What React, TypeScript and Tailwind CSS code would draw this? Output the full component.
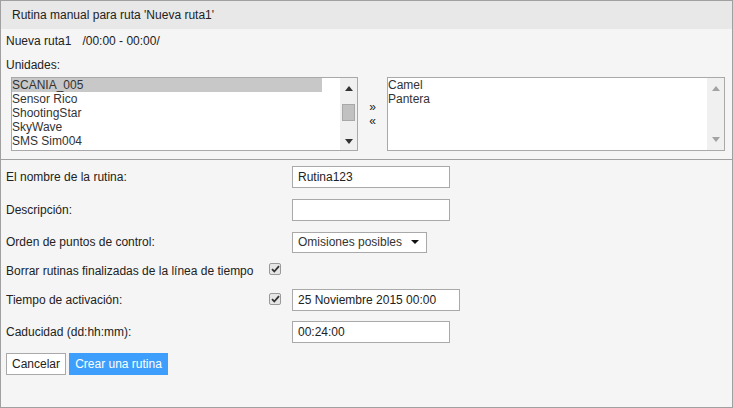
import React from "react";

const Check = () => (
  <span className="flex h-[12px] w-[12px] items-center justify-center rounded-[2px] border border-[#9a9a9a] bg-[#e6e6e6]">
    <svg width="9" height="8" viewBox="0 0 9 8">
      <path d="M1 4.2 L3.3 6.5 L8 1.2" fill="none" stroke="#333" strokeWidth="1.8" />
    </svg>
  </span>
);

const Up = ({ c }: { c: string }) => (
  <svg width="8" height="5" viewBox="0 0 8 5"><path d="M0 5 L4 0 L8 5 Z" fill={c} /></svg>
);
const Down = ({ c }: { c: string }) => (
  <svg width="8" height="5" viewBox="0 0 8 5"><path d="M0 0 L4 5 L8 0 Z" fill={c} /></svg>
);

export default function App() {
  const left = ["SCANIA_005", "Sensor Rico", "ShootingStar", "SkyWave", "SMS Sim004"];
  const right = ["Camel", "Pantera"];
  return (
    <div className="flex h-[408px] w-[733px] flex-col border border-[#a0a0a0] bg-[#f5f5f5] font-['Liberation_Sans',Arial,sans-serif] text-[12px] text-[#222]">
      <div className="flex h-[28px] items-center bg-[#e8e8e8] pl-[11px]">Rutina manual para ruta 'Nueva ruta1'</div>
      <div className="flex h-[131px] flex-col border-b border-[#a0a0a0] pl-[5px] pt-[5px]">
        <div className="h-[14px] leading-[14px]">
          Nueva ruta1<span className="ml-[11px]">/00:00 - 00:00/</span>
        </div>
        <div className="mt-[10px] h-[14px] leading-[14px]">Unidades:</div>
        <div className="mt-[5px] flex">
          <div className="ml-[5px] flex h-[74px] w-[347px] border border-[#a9a9a9] bg-white text-[#333]">
            <div className="flex-1">
              {left.map((t, i) => (
                <div key={t} className={"h-[14px] w-[310px] leading-[14px] " + (i === 0 ? "bg-[#c8c8c8]" : "")}>{t}</div>
              ))}
            </div>
            <div className="flex w-[17px] flex-col items-center bg-[#f0f0f0]">
              <div className="mt-[8px]"><Up c="#333" /></div>
              <div className="mt-[13px] h-[17px] w-[13px] border border-[#a8a8a8] bg-[#c1c1c1]"></div>
              <div className="mt-[18px]"><Down c="#333" /></div>
            </div>
          </div>
          <div className="flex w-[29px] flex-col items-center justify-center text-[12px] leading-[14px]">
            <span className="h-[14px]">»</span>
            <span className="h-[14px]">«</span>
          </div>
          <div className="flex h-[74px] w-[338px] border border-[#a9a9a9] bg-white text-[#333]">
            <div className="flex-1">
              {right.map((t) => (
                <div key={t} className="h-[14px] leading-[14px]">{t}</div>
              ))}
            </div>
            <div className="flex w-[17px] flex-col items-center justify-between bg-[#f0f0f0] pb-[8px] pt-[8px]">
              <Up c="#a3a3a3" />
              <Down c="#a3a3a3" />
            </div>
          </div>
        </div>
      </div>
      <div className="flex flex-col pl-[5px] pt-[6px]">
        <div className="flex h-[22px] items-center">
          <div className="w-[263px]">El nombre de la rutina:</div>
          <div className="w-[23px]"></div>
          <div className="flex h-[22px] w-[158px] items-center border border-[#a9a9a9] bg-white pl-[5px]">Rutina123</div>
        </div>
        <div className="mt-[11px] flex h-[22px] items-center">
          <div className="w-[263px]">Descripción:</div>
          <div className="w-[23px]"></div>
          <div className="h-[22px] w-[158px] border border-[#a9a9a9] bg-white"></div>
        </div>
        <div className="mt-[10px] flex h-[22px] items-center">
          <div className="w-[263px]">Orden de puntos de control:</div>
          <div className="w-[23px]"></div>
          <div className="flex h-[21px] w-[135px] items-center justify-between border border-[#a9a9a9] bg-white pl-[5px] pr-[7px] text-[#333]">
            <span>Omisiones posibles</span>
            <svg width="8" height="4" viewBox="0 0 8 4"><path d="M0 0 L4 4 L8 0 Z" fill="#111" /></svg>
          </div>
        </div>
        <div className="mt-[8px] flex h-[20px] items-center">
          <div className="w-[263px]">Borrar rutinas finalizadas de la línea de tiempo</div>
          <div className="mb-[4px] w-[23px]"><Check /></div>
        </div>
        <div className="mt-[8px] flex h-[22px] items-center">
          <div className="w-[263px]">Tiempo de activación:</div>
          <div className="mb-[3px] w-[23px]"><Check /></div>
          <div className="flex h-[22px] w-[168px] items-center border border-[#a9a9a9] bg-white pl-[5px]">25 Noviembre 2015 00:00</div>
        </div>
        <div className="mt-[10px] flex h-[22px] items-center">
          <div className="w-[263px]">Caducidad (dd:hh:mm):</div>
          <div className="w-[23px]"></div>
          <div className="flex h-[22px] w-[158px] items-center border border-[#a9a9a9] bg-white pl-[5px]">00:24:00</div>
        </div>
        <div className="mt-[10px] flex h-[22px] gap-[3px]">
          <div className="flex h-[22px] w-[60px] items-center justify-center border border-[#a9a9a9] bg-white">Cancelar</div>
          <div className="flex h-[22px] w-[99px] items-center justify-center bg-[#3d9ffb] text-white">Crear una rutina</div>
        </div>
      </div>
    </div>
  );
}
